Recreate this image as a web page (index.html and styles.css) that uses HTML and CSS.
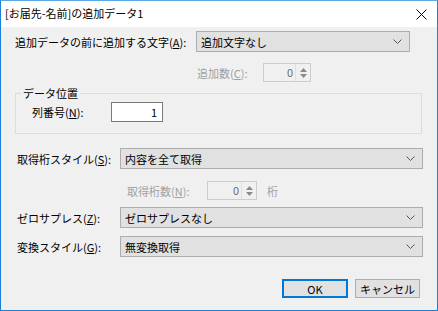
FILE: index.html
```html
<!DOCTYPE html>
<html>
<head>
    <title>[お届先-名前]の追加データ1</title>
    <link rel="stylesheet" href="styles.css">
</head>
<body>
    <div class="window">
        <div class="titlebar">
            <span class="title">[お届先-名前]の追加データ1</span>
            <svg class="close" width="11" height="11" viewBox="0 0 11 11">
                <path d="M0.5 0.5 L10.5 10.5 M10.5 0.5 L0.5 10.5" stroke="#000" stroke-width="1" fill="none"/>
            </svg>
        </div>
        <div class="content">
            <div class="row row-prefix">
                <span class="label label-prefix">追加データの前に追加する文字(<u>A</u>):</span>
                <div class="combo combo-short">
                    <span>追加文字なし</span>
                    <svg class="chevron" width="9" height="5" viewBox="0 0 9 5"><path d="M0.5 0.5 L4.5 4.5 L8.5 0.5" stroke="#555" fill="none"/></svg>
                </div>
            </div>
            <div class="row row-count">
                <span class="label disabled">追加数(<u>C</u>):</span>
                <div class="spin spin-count">
                    <span class="spin-value">0</span>
                    <div class="spin-buttons">
                        <svg width="7" height="4" viewBox="0 0 7 4"><path d="M0 4 L3.5 0 L7 4 Z" fill="#8a8a8a"/></svg>
                        <svg width="7" height="4" viewBox="0 0 7 4"><path d="M0 0 L3.5 4 L7 0 Z" fill="#8a8a8a"/></svg>
                    </div>
                </div>
            </div>
            <fieldset class="group">
                <legend>データ位置</legend>
                <div class="row row-column">
                    <span class="label label-column">列番号(<u>N</u>):</span>
                    <div class="textbox">1</div>
                </div>
            </fieldset>
            <div class="row row-style">
                <span class="label label-wide">取得桁スタイル(<u>S</u>):</span>
                <div class="combo combo-long">
                    <span>内容を全て取得</span>
                    <svg class="chevron" width="9" height="5" viewBox="0 0 9 5"><path d="M0.5 0.5 L4.5 4.5 L8.5 0.5" stroke="#555" fill="none"/></svg>
                </div>
            </div>
            <div class="row row-digits">
                <span class="label disabled">取得桁数(<u>N</u>):</span>
                <div class="spin spin-digits">
                    <span class="spin-value">0</span>
                    <div class="spin-buttons">
                        <svg width="7" height="4" viewBox="0 0 7 4"><path d="M0 4 L3.5 0 L7 4 Z" fill="#8a8a8a"/></svg>
                        <svg width="7" height="4" viewBox="0 0 7 4"><path d="M0 0 L3.5 4 L7 0 Z" fill="#8a8a8a"/></svg>
                    </div>
                </div>
                <span class="unit disabled">桁</span>
            </div>
            <div class="row row-zero">
                <span class="label label-wide">ゼロサプレス(<u>Z</u>):</span>
                <div class="combo combo-long">
                    <span>ゼロサプレスなし</span>
                    <svg class="chevron" width="9" height="5" viewBox="0 0 9 5"><path d="M0.5 0.5 L4.5 4.5 L8.5 0.5" stroke="#555" fill="none"/></svg>
                </div>
            </div>
            <div class="row row-convert">
                <span class="label label-wide">変換スタイル(<u>G</u>):</span>
                <div class="combo combo-long">
                    <span>無変換取得</span>
                    <svg class="chevron" width="9" height="5" viewBox="0 0 9 5"><path d="M0.5 0.5 L4.5 4.5 L8.5 0.5" stroke="#555" fill="none"/></svg>
                </div>
            </div>
            <div class="buttons">
                <button class="button button-default">OK</button>
                <button class="button">キャンセル</button>
            </div>
        </div>
    </div>
</body>
</html>
```

FILE: styles.css
```css
body {
    margin: 0;
    font-family: "Noto Sans CJK JP", "Noto Sans", sans-serif;
    font-size: 11px;
    color: #000;
}

.window {
    width: 438px;
    height: 311px;
    box-sizing: border-box;
    border: 1px solid #1c80d6;
    border-top-color: #5fa7e4;
    background-color: #f0f0f0;
}

.titlebar {
    height: 26px;
    background-color: #fff;
    display: flex;
    align-items: center;
    justify-content: space-between;
    padding-left: 4px;
    padding-right: 10px;
}

.title {
    font-size: 11px;
    line-height: 14px;
    padding-bottom: 2px;
}

.close {
    display: block;
    margin-top: 1px;
}

.content {
    display: flex;
    flex-direction: column;
}

.row {
    display: flex;
    align-items: center;
}

.label {
    line-height: 14px;
    white-space: nowrap;
}

u {
    text-decoration-thickness: 1px;
    text-underline-offset: 1px;
}

.disabled {
    color: #a0a0a0;
}

.row-prefix {
    margin-top: 4px;
    padding-left: 14px;
}

.label-prefix {
    width: 181px;
}

.combo {
    height: 21px;
    box-sizing: border-box;
    border: 1px solid #adadad;
    background-color: #e1e1e1;
    display: flex;
    align-items: center;
    justify-content: space-between;
    padding-left: 4px;
    padding-right: 7px;
    line-height: 14px;
}

.combo-short {
    width: 214px;
}

.combo-long {
    width: 303px;
}

.chevron {
    display: block;
}

.row-count {
    margin-top: 11px;
    padding-left: 196px;
}

.row-count .label {
    width: 66px;
}

.spin {
    height: 19px;
    box-sizing: border-box;
    border: 1px solid #cccccc;
    background-color: #f0f0f0;
    display: flex;
    align-items: stretch;
    justify-content: flex-end;
}

.spin-count {
    width: 48px;
}

.spin-digits {
    width: 50px;
}

.spin-value {
    color: #6d6d6d;
    line-height: 17px;
    padding-right: 2px;
}

.spin-buttons {
    width: 14px;
    display: flex;
    flex-direction: column;
    align-items: center;
    justify-content: center;
    gap: 2px;
    border-left: 1px solid #e0e0e0;
}

.spin-buttons svg {
    display: block;
}

.group {
    margin: 4px 15px 0 14px;
    padding: 0 0 8px 0;
    border: 1px solid #dcdcdc;
    height: 38px;
    box-sizing: content-box;
}

.group legend {
    margin-left: 5px;
    padding: 0 2px;
    line-height: 14px;
}

.row-column {
    padding-left: 16px;
    margin-top: 2px;
}

.label-column {
    width: 79px;
}

.textbox {
    width: 52px;
    height: 20px;
    box-sizing: border-box;
    border: 1px solid #7a7a7a;
    background-color: #fff;
    text-align: right;
    line-height: 18px;
    padding-right: 5px;
}

.row-style {
    margin-top: 14px;
    padding-left: 16px;
}

.label-wide {
    width: 103px;
}

.row-digits {
    margin-top: 12px;
    padding-left: 126px;
}

.row-digits .label {
    width: 80px;
}

.unit {
    margin-left: 10px;
    line-height: 14px;
}

.row-zero {
    margin-top: 7px;
    padding-left: 16px;
}

.row-convert {
    margin-top: 8px;
    padding-left: 16px;
}

.buttons {
    display: flex;
    justify-content: flex-end;
    gap: 7px;
    margin-top: 22px;
    padding-right: 17px;
}

.button {
    width: 65px;
    height: 19px;
    box-sizing: border-box;
    border: 1px solid #adadad;
    background-color: #e1e1e1;
    font-family: "Noto Sans CJK JP", "Noto Sans", sans-serif;
    font-size: 11px;
    font-weight: normal;
    line-height: 14px;
    padding: 0;
    color: #000;
}

.button-default {
    width: 66px;
    border: 2px solid #0078d7;
}
```
